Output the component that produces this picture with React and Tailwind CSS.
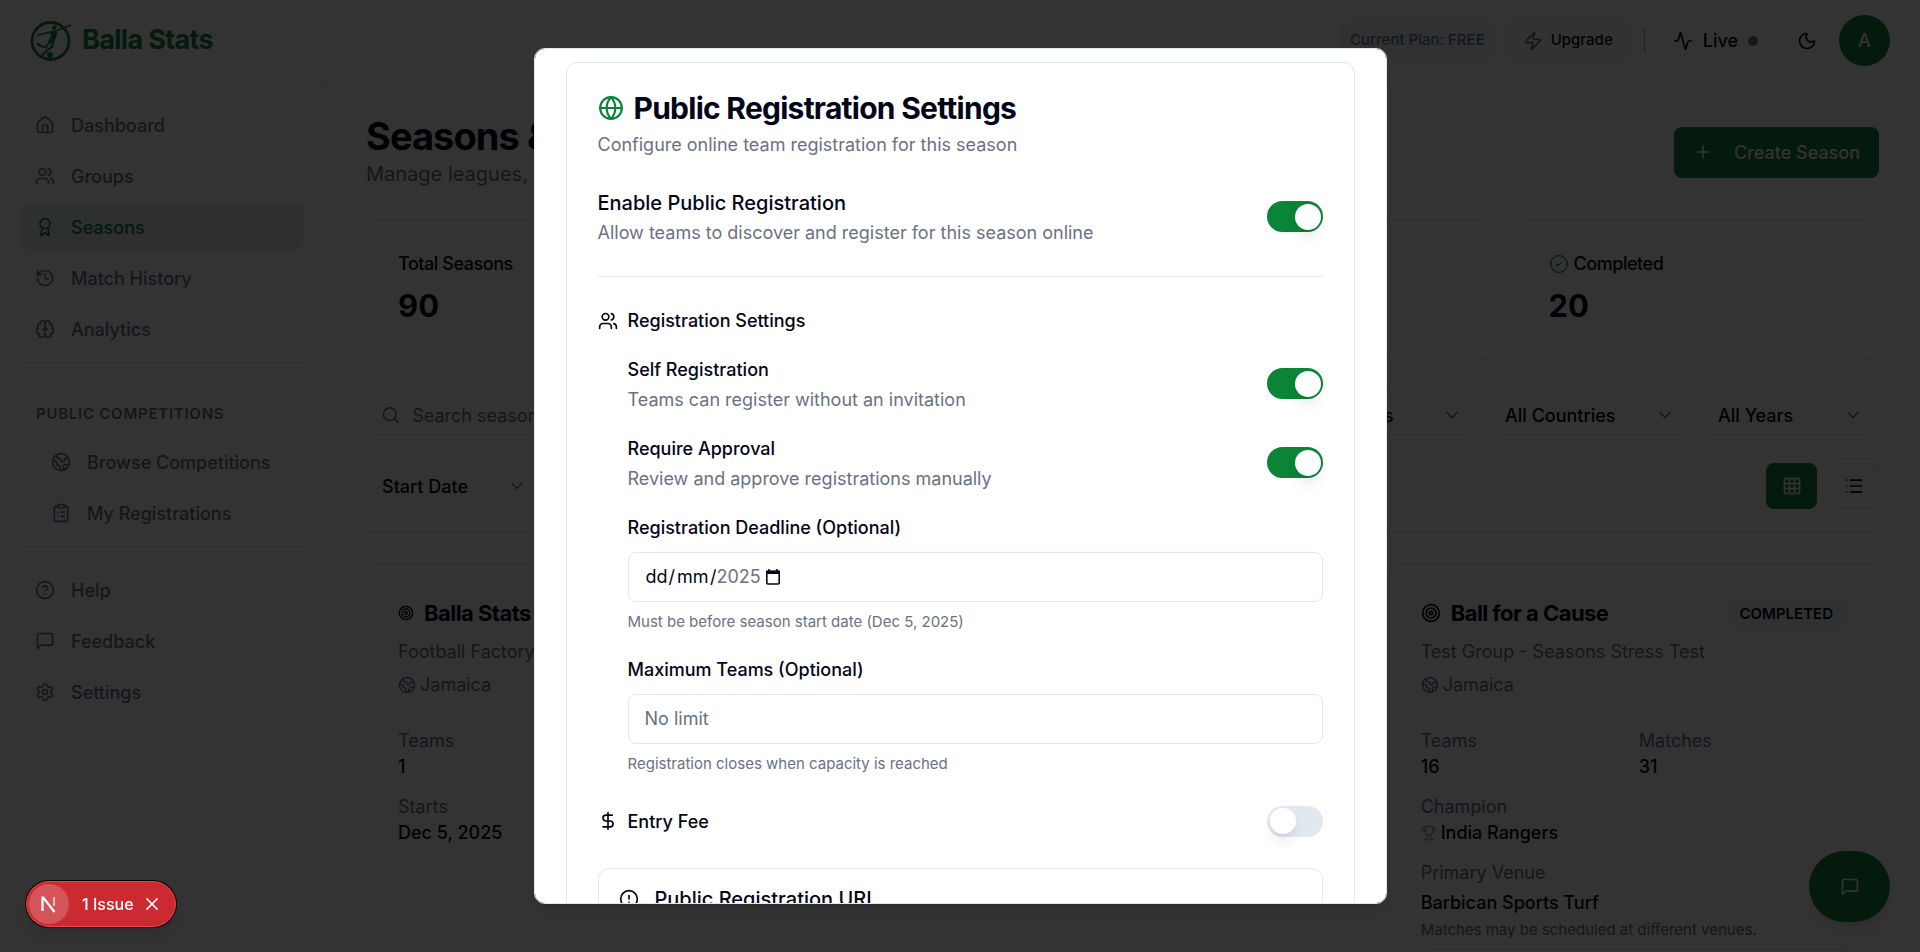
import React, { useState } from 'react'
import {
  Activity,
  Award,
  Brain,
  ChevronDown,
  CircleAlert,
  CircleCheck,
  ClipboardList,
  DollarSign,
  Earth,
  Globe,
  Grid3x3,
  CircleQuestionMark,
  History,
  House,
  List,
  Moon,
  Plus,
  Search,
  Settings,
  Target,
  Trophy,
  Users,
  X,
  Zap,
} from 'lucide-react'

function MessageIcon({ size = 20, className = '' }) {
  return (
    <svg
      width={size}
      height={size}
      viewBox="0 0 24 24"
      fill="none"
      stroke="currentColor"
      strokeWidth="2"
      strokeLinecap="round"
      strokeLinejoin="round"
      className={className}
      aria-hidden="true"
    >
      <path d="M21 15a2 2 0 0 1-2 2H7l-4 4V5a2 2 0 0 1 2-2h14a2 2 0 0 1 2 2z" />
    </svg>
  )
}

function Logo() {
  return (
    <svg width="42" height="42" viewBox="0 0 42 42" fill="none" className="text-[#15803d]" aria-hidden="true">
      <circle cx="20.5" cy="21" r="18.5" stroke="currentColor" strokeWidth="2.8" />
      <circle cx="24.5" cy="7.5" r="2.2" fill="currentColor" />
      <path d="M20 11.5l5-1.5 2.5 2.5-1.5 5-2 5.5-4 .5-1.5-2.5 2.5-5z" fill="currentColor" />
      <path d="M22 11.5l-6 1.5-9 2.5M26 11l6-2.500 9-3.500" stroke="currentColor" strokeWidth="1.4" />
      <path d="M20 21l-4 6-4-.5-5-3M23 22l-1 5-5 3.500-5 5" stroke="currentColor" strokeWidth="2.200" />
      <circle cx="20" cy="35" r="3" fill="currentColor" />
    </svg>
  )
}

const mainLinks = [
  { label: 'Dashboard', icon: House },
  { label: 'Groups', icon: Users },
  { label: 'Seasons', icon: Award, active: true },
  { label: 'Match History', icon: History },
  { label: 'Analytics', icon: Brain },
]

const publicLinks = [
  { label: 'Browse Competitions', icon: Earth },
  { label: 'My Registrations', icon: ClipboardList },
]

const supportLinks = [
  { label: 'Help', icon: CircleQuestionMark },
  { label: 'Feedback', icon: MessageIcon },
  { label: 'Settings', icon: Settings },
]

function NavLinks({ links }) {
  return (
    <ul className="flex flex-col gap-[5px]">
      {links.map(({ label, icon: Icon, active }) => (
        <li key={label}>
          <a
            href="#"
            className={`flex h-[46px] items-center gap-4 rounded-[10px] px-[15px] text-[18px] font-medium ${
              active ? 'bg-slate-200 text-[#15803d]' : 'text-slate-500'
            }`}
          >
            <Icon size={20} />
            {label}
          </a>
        </li>
      ))}
    </ul>
  )
}

function Sidebar() {
  return (
    <aside className="w-[325px] shrink-0 border-r border-slate-200 px-5 pt-5">
      <nav>
        <NavLinks links={mainLinks} />
        <div className="mt-[15px] border-t border-slate-200 pt-[34px]">
          <h2 className="px-4 text-[15px] leading-6 font-semibold tracking-wider text-slate-500">
            PUBLIC COMPETITIONS
          </h2>
          <div className="mt-[13px] pl-4">
            <NavLinks links={publicLinks} />
          </div>
        </div>
        <div className="mt-[15px] border-t border-slate-200 pt-[15px]">
          <NavLinks links={supportLinks} />
        </div>
      </nav>
    </aside>
  )
}

function Header() {
  return (
    <header className="flex h-[82px] shrink-0 items-center justify-between border-b border-slate-200 px-[30px]">
      <a href="#" className="flex items-center gap-[10px]">
        <Logo />
        <span className="text-[27px] font-bold tracking-tight text-[#15803d]">Balla Stats</span>
      </a>
      <div className="flex items-center">
        <span className="flex h-10 items-center rounded-[10px] bg-slate-100 px-[10px] text-[15px] font-medium text-slate-500">
          Current Plan: FREE
        </span>
        <button className="ml-[11px] flex h-10 items-center gap-2 rounded-[10px] border border-slate-200 bg-slate-50 px-4 text-[15px] font-medium">
          <Zap size={20} className="text-slate-500" />
          Upgrade
        </button>
        <span className="mx-[14px] h-6 w-px bg-slate-400" />
        <button className="flex items-center gap-[10px] px-[14px] text-[18px] font-medium">
          <Activity size={20} />
          Live
          <span className="h-[10px] w-[10px] rounded-full bg-gray-500" />
        </button>
        <button aria-label="Toggle theme" className="flex h-10 w-[58px] items-center justify-center pl-3">
          <Moon size={20} />
        </button>
        <button className="ml-[9px] h-[51px] w-[51px] rounded-full bg-[#15803d] text-[18px] font-medium text-white">
          A
        </button>
      </div>
    </header>
  )
}

function StatCard({ label, value, icon: Icon }) {
  return (
    <div className="h-[140px] rounded-[11px] border border-slate-200 px-[31px] pt-[30px]">
      <div className="flex items-center gap-[5px] text-[18px] leading-7 font-medium tracking-tight">
        {Icon && <Icon size={20} strokeWidth={1.5} className="text-[#15803d]" />}
        {label}
      </div>
      <p className="mt-3 text-[31px] leading-8 font-bold">{value}</p>
    </div>
  )
}

function FilterSelect({ label, options, className }) {
  return (
    <div className={`grid shrink-0 items-center ${className}`}>
      <select
        aria-label={label}
        className="col-start-1 row-start-1 h-[50px] appearance-none rounded-[10px] border border-slate-200 bg-white px-[15px] text-[18px] font-medium"
      >
        {options.map((option) => (
          <option key={option}>{option}</option>
        ))}
      </select>
      <ChevronDown
        size={20}
        className="pointer-events-none col-start-1 row-start-1 mr-4 justify-self-end text-slate-500"
      />
    </div>
  )
}

function Field({ label, children }) {
  return (
    <div>
      <dt className="text-slate-500">{label}</dt>
      <dd className="flex items-center gap-1 font-medium">{children}</dd>
    </div>
  )
}

function SeasonCard({ title, iconSize, group, badge, children }) {
  return (
    <article className="rounded-[11px] border border-slate-200 px-[31px] pt-[30px] text-[18px] leading-[26px]">
      <div className="flex items-center justify-between">
        <h3 className="flex items-center gap-[10px] text-[22px] leading-9 font-bold tracking-tight whitespace-nowrap">
          <Target size={iconSize} />
          {title}
        </h3>
        <span className="rounded-full bg-slate-100 px-[14px] text-[15px] leading-[27px] font-semibold">{badge}</span>
      </div>
      <p className="mt-2 text-slate-500">{group}</p>
      <p className="mt-[7px] flex items-center gap-1 text-slate-500">
        <Earth size={18} />
        Jamaica
      </p>
      <div className="mt-[30px]">{children}</div>
    </article>
  )
}

function SeasonsPage() {
  return (
    <main className="min-w-0 flex-1 overflow-hidden px-[41px] pt-[34px]">
      <div className="flex items-center justify-between">
        <div>
          <h1 className="text-[38px] leading-10 font-bold tracking-tight">Seasons &amp; Tournaments</h1>
          <p className="mt-1 text-[20px] leading-7 text-slate-500">Manage leagues, cups and more</p>
        </div>
        <button className="flex h-[51px] items-center gap-[21px] rounded-lg bg-[#15803d] px-[19px] text-[18px] font-medium text-white">
          <Plus size={20} />
          Create Season
        </button>
      </div>

      <div className="mt-[31px] grid grid-cols-4 gap-[21px]">
        <StatCard label="Total Seasons" value="90" />
        <StatCard label="Active" value="50" />
        <StatCard label="Upcoming" value="20" />
        <StatCard label="Completed" value="20" icon={CircleCheck} />
      </div>

      <div className="mt-[31px] flex gap-[11px]">
        <label className="flex h-[50px] flex-1 items-center gap-3 rounded-[10px] border border-slate-200 px-[14px] text-slate-500">
          <Search size={20} />
          <input
            type="search"
            placeholder="Search seasons..."
            aria-label="Search seasons"
            className="w-full text-[18px] placeholder:text-slate-500"
          />
        </label>
        <FilterSelect label="Status" options={['All Statuses']} className="w-[202px]" />
        <FilterSelect label="Country" options={['All Countries']} className="w-[202px]" />
        <FilterSelect label="Year" options={['All Years']} className="w-[177px]" />
      </div>

      <div className="mt-[21px] flex items-center justify-between border-b border-slate-200 pb-[21px]">
        <FilterSelect label="Sort by" options={['Start Date']} className="w-[177px]" />
        <div className="flex gap-[11px]">
          <button
            aria-label="Grid view"
            className="flex h-[46px] w-[51px] items-center justify-center rounded-lg bg-[#15803d] text-white"
          >
            <Grid3x3 size={20} />
          </button>
          <button
            aria-label="List view"
            className="flex h-[46px] w-[51px] items-center justify-center rounded-lg border border-slate-200"
          >
            <List size={20} />
          </button>
        </div>
      </div>

      <div className="mt-[31px] grid h-[480px] grid-cols-3 gap-[21px]">
        <SeasonCard title="Balla Stats Cup" iconSize={16} group="Football Factory" badge="DRAFT">
          <dl className="grid grid-cols-2 gap-x-[10px] gap-y-[14px]">
            <Field label="Teams">1</Field>
            <Field label="Matches">0</Field>
            <Field label="Starts">Dec 5, 2025</Field>
          </dl>
          <div className="h-[45px] rounded-lg border border-slate-200" />
        </SeasonCard>
        <article className="rounded-[11px] border border-slate-200" />
        <SeasonCard title="Ball for a Cause" iconSize={20} group="Test Group - Seasons Stress Test" badge="COMPLETED">
          <dl className="grid grid-cols-2 gap-x-[10px] gap-y-[14px]">
            <Field label="Teams">16</Field>
            <Field label="Matches">31</Field>
            <div className="col-span-2">
              <Field label="Champion">
                <Trophy size={16} className="text-slate-400" />
                India Rangers
              </Field>
            </div>
            <div className="col-span-2">
              <dt className="text-slate-500">Primary Venue</dt>
              <dd className="mt-1 font-medium">Barbican Sports Turf</dd>
              <dd className="text-[15px] leading-7 text-slate-500">Matches may be scheduled at different venues.</dd>
            </div>
          </dl>
          <div className="h-[45px] rounded-lg border border-slate-200" />
        </SeasonCard>
      </div>
    </main>
  )
}

function Toggle({ id, checked, onChange }) {
  return (
    <span className="grid h-[31px] w-14 shrink-0 items-center">
      <input
        id={id}
        type="checkbox"
        role="switch"
        checked={checked}
        onChange={onChange}
        className="peer col-start-1 row-start-1 h-[31px] w-14 appearance-none rounded-full bg-slate-200 checked:bg-[#0a8537]"
      />
      <span className="pointer-events-none col-start-1 row-start-1 ml-[3px] h-[26px] w-[26px] rounded-full bg-white shadow-lg peer-checked:ml-[28px]" />
    </span>
  )
}

function ToggleRow({ id, title, description, checked, onChange }) {
  return (
    <div className="flex items-center justify-between">
      <div>
        <label htmlFor={id} className="block leading-7 font-medium">
          {title}
        </label>
        <p className="mt-1 leading-6 text-gray-500">{description}</p>
      </div>
      <Toggle id={id} checked={checked} onChange={onChange} />
    </div>
  )
}

function CalendarIcon() {
  return (
    <svg width="16" height="18" viewBox="0 0 16 18" fill="none" stroke="currentColor" aria-hidden="true">
      <rect x="1.8" y="3.5" width="12.4" height="12.5" rx="1" strokeWidth="1.6" />
      <path d="M1.8 3.2h12.4v2H1.8zM4 1v3M12 1v3" fill="currentColor" strokeWidth="1.6" />
    </svg>
  )
}

function RegistrationDialog() {
  const [settings, setSettings] = useState({
    enabled: true,
    selfRegistration: true,
    requireApproval: true,
    entryFee: false,
  })

  const toggle = (key) => setSettings((prev) => ({ ...prev, [key]: !prev[key] }))

  return (
    <div className="fixed inset-0 flex items-center justify-center bg-black/80">
      <div
        role="dialog"
        aria-modal="true"
        aria-labelledby="dialog-title"
        className="max-h-[90vh] w-full max-w-[853px] overflow-y-auto rounded-[11px] border border-slate-200 bg-white px-[31px] pt-[13px] text-[18px] shadow-lg [scrollbar-width:none]"
      >
        <section className="rounded-[11px] border border-slate-200 px-[31px] pt-[25px] pb-8">
          <h2
            id="dialog-title"
            className="flex items-center gap-[10px] text-[30px] leading-10 font-bold tracking-tight"
          >
            <Globe size={26} className="text-[#0a8537]" />
            Public Registration Settings
          </h2>
          <p className="mt-1 leading-[26px] text-gray-500">Configure online team registration for this season</p>

          <div className="mt-[31px] flex items-center justify-between border-b border-slate-200 pb-[31px]">
            <div>
              <label htmlFor="enabled" className="block text-[20px] leading-7 font-medium">
                Enable Public Registration
              </label>
              <p className="mt-1 leading-6 text-gray-500">
                Allow teams to discover and register for this season online
              </p>
            </div>
            <Toggle id="enabled" checked={settings.enabled} onChange={() => toggle('enabled')} />
          </div>

          <h3 className="mt-[30px] flex items-center gap-[10px] leading-7 font-medium">
            <Users size={20} />
            Registration Settings
          </h3>

          <div className="mt-[21px] ml-[30px] flex flex-col gap-[23px]">
            <ToggleRow
              id="self-registration"
              title="Self Registration"
              description="Teams can register without an invitation"
              checked={settings.selfRegistration}
              onChange={() => toggle('selfRegistration')}
            />
            <ToggleRow
              id="require-approval"
              title="Require Approval"
              description="Review and approve registrations manually"
              checked={settings.requireApproval}
              onChange={() => toggle('requireApproval')}
            />
            <div>
              <label htmlFor="deadline-day" className="block leading-7 font-medium">
                Registration Deadline (Optional)
              </label>
              <div className="mt-[10px] flex h-[50px] items-center rounded-lg border border-slate-200 px-[17px]">
                <input id="deadline-day" defaultValue="dd" className="w-[23px]" />
                <span>/</span>
                <input aria-label="Month" defaultValue="mm" className="ml-[2px] w-[33px]" />
                <span>/</span>
                <input aria-label="Year" defaultValue="2025" className="w-[48px] text-gray-500" />
                <button aria-label="Open calendar">
                  <CalendarIcon />
                </button>
              </div>
              <p className="mt-[9px] text-[15px] leading-[22px] text-gray-500">
                Must be before season start date (Dec 5, 2025)
              </p>
            </div>
            <div>
              <label htmlFor="max-teams" className="block leading-7 font-medium">
                Maximum Teams (Optional)
              </label>
              <input
                id="max-teams"
                placeholder="No limit"
                className="mt-[10px] block h-[50px] w-full rounded-lg border border-slate-200 px-4 placeholder:text-gray-500"
              />
              <p className="mt-[9px] text-[15px] leading-[22px] text-gray-500">
                Registration closes when capacity is reached
              </p>
            </div>
          </div>

          <div className="mt-[31px] flex items-center justify-between">
            <label htmlFor="entry-fee" className="flex items-center gap-[10px] font-medium">
              <DollarSign size={20} />
              Entry Fee
            </label>
            <Toggle id="entry-fee" checked={settings.entryFee} onChange={() => toggle('entryFee')} />
          </div>

          <div className="mt-[31px] h-40 rounded-[11px] border border-slate-200 px-5 pt-4">
            <h4 className="flex items-center gap-4 text-[20px] leading-7 font-medium">
              <CircleAlert size={20} />
              Public Registration URL
            </h4>
          </div>
        </section>
      </div>
    </div>
  )
}

function IssueBadge() {
  return (
    <div className="fixed bottom-[25px] left-[26px] flex h-[46px] items-center rounded-full border border-[#e5484d] bg-[#ca2a30] pr-[13px] pl-[2px] text-white shadow-lg ring-1 ring-black">
      <span className="flex h-10 w-10 items-center justify-center rounded-full bg-white/20">
        <svg width="22" height="22" viewBox="0 0 22 22" fill="none" aria-hidden="true">
          <path d="M4.500 18V4.500h.8L16.500 19" stroke="white" strokeWidth="2.200" />
          <path d="M16 4v9" stroke="white" strokeOpacity="0.6" strokeWidth="2.200" />
        </svg>
      </span>
      <button className="ml-[13px] text-[16px] font-medium">1 Issue</button>
      <button aria-label="Dismiss" className="ml-2">
        <X size={20} />
      </button>
    </div>
  )
}

function App() {
  return (
    <div className="flex h-screen flex-col overflow-hidden bg-white font-['Inter',sans-serif] text-slate-950">
      <Header />
      <div className="flex min-h-0 flex-1">
        <Sidebar />
        <SeasonsPage />
      </div>
      <button
        aria-label="Open feedback chat"
        className="fixed right-[30px] bottom-[30px] flex h-[71px] w-[81px] items-center justify-center rounded-[36px] bg-[#15803d] text-white shadow-lg"
      >
        <MessageIcon size={20} />
      </button>
      <RegistrationDialog />
      <IssueBadge />
    </div>
  )
}

export default App
